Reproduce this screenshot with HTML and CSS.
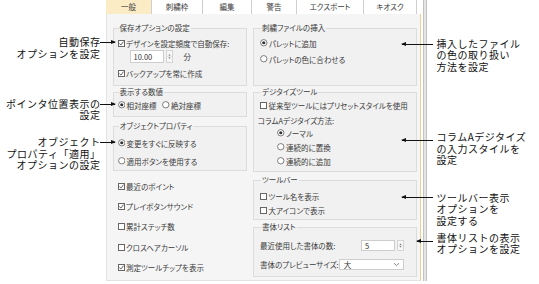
FILE: index.html
```html
<!DOCTYPE html>
<html lang="ja">
<head>
<meta charset="utf-8">
<link rel="stylesheet" href="styles.css">
</head>
<body>
<div class="stage">
  <div class="left-gutter"></div>
  <div class="dialog">
    <div class="tabs">
      <div class="tab active t1">一般</div>
      <div class="tab t2">刺繍枠</div>
      <div class="tab t3">編集</div>
      <div class="tab t4">警告</div>
      <div class="tab t5">エクスポート</div>
      <div class="tab t6">キオスク</div>
    </div>
    <div class="panel">
      <div class="col col-left">
        <fieldset class="group g-save">
          <legend>保存オプションの設定</legend>
          <div class="row h10"><svg class="cb" viewBox="0 0 7 7"><rect x=".5" y=".5" width="6" height="6" fill="#fff" stroke="#666"/><path d="M1.4 3.6 L2.9 5 L5.6 1.6" fill="none" stroke="#333" stroke-width=".8"/></svg>デザインを設定頻度で自動保存:</div>
          <div class="row spin-row">
            <div class="spin-input w34">10.00</div>
            <div class="spinner"><svg viewBox="0 0 7 13"><path d="M2 5 L3.5 3.3 L5 5Z M2 8 L3.5 9.7 L5 8Z" fill="#555"/><line x1="0" y1="6.5" x2="7" y2="6.5" stroke="#d6d6d6" stroke-width=".6"/></svg></div>
            <span class="unit">分</span>
          </div>
          <div class="row h10 mt5"><svg class="cb" viewBox="0 0 7 7"><rect x=".5" y=".5" width="6" height="6" fill="#fff" stroke="#666"/><path d="M1.4 3.6 L2.9 5 L5.6 1.6" fill="none" stroke="#333" stroke-width=".8"/></svg>バックアップを常に作成</div>
        </fieldset>
        <fieldset class="group g-disp">
          <legend>表示する数値</legend>
          <div class="row h10"><svg class="rb" viewBox="0 0 8 8"><circle cx="4" cy="4" r="3.4" fill="#fff" stroke="#555" stroke-width=".8"/><circle cx="4" cy="4" r="1.7" fill="#333"/></svg>相対座標<svg class="rb gap-l" viewBox="0 0 8 8"><circle cx="4" cy="4" r="3.4" fill="#fff" stroke="#555" stroke-width=".8"/></svg>絶対座標</div>
        </fieldset>
        <fieldset class="group g-obj">
          <legend>オブジェクトプロパティ</legend>
          <div class="row h10"><svg class="rb" viewBox="0 0 8 8"><circle cx="4" cy="4" r="3.4" fill="#fff" stroke="#555" stroke-width=".8"/><circle cx="4" cy="4" r="1.7" fill="#333"/></svg>変更をすぐに反映する</div>
          <div class="row h10 mt8"><svg class="rb" viewBox="0 0 8 8"><circle cx="4" cy="4" r="3.4" fill="#fff" stroke="#555" stroke-width=".8"/></svg>適用ボタンを使用する</div>
        </fieldset>
        <div class="loose">
          <div class="row h10"><svg class="cb" viewBox="0 0 7 7"><rect x=".5" y=".5" width="6" height="6" fill="#fff" stroke="#666"/><path d="M1.4 3.6 L2.9 5 L5.6 1.6" fill="none" stroke="#333" stroke-width=".8"/></svg>最近のポイント</div>
          <div class="row h10"><svg class="cb" viewBox="0 0 7 7"><rect x=".5" y=".5" width="6" height="6" fill="#fff" stroke="#666"/><path d="M1.4 3.6 L2.9 5 L5.6 1.6" fill="none" stroke="#333" stroke-width=".8"/></svg>プレイボタンサウンド</div>
          <div class="row h10"><svg class="cb" viewBox="0 0 7 7"><rect x=".5" y=".5" width="6" height="6" fill="#fff" stroke="#666"/></svg>累計ステッチ数</div>
          <div class="row h10"><svg class="cb" viewBox="0 0 7 7"><rect x=".5" y=".5" width="6" height="6" fill="#fff" stroke="#666"/></svg>クロスヘアカーソル</div>
          <div class="row h10"><svg class="cb" viewBox="0 0 7 7"><rect x=".5" y=".5" width="6" height="6" fill="#fff" stroke="#666"/><path d="M1.4 3.6 L2.9 5 L5.6 1.6" fill="none" stroke="#333" stroke-width=".8"/></svg>測定ツールチップを表示</div>
        </div>
      </div>
      <div class="col col-right">
        <fieldset class="group g-ins">
          <legend>刺繍ファイルの挿入</legend>
          <div class="row h10"><svg class="rb" viewBox="0 0 8 8"><circle cx="4" cy="4" r="3.4" fill="#fff" stroke="#555" stroke-width=".8"/><circle cx="4" cy="4" r="1.7" fill="#333"/></svg>パレットに追加</div>
          <div class="row h10 mt6"><svg class="rb" viewBox="0 0 8 8"><circle cx="4" cy="4" r="3.4" fill="#fff" stroke="#555" stroke-width=".8"/></svg>パレットの色に合わせる</div>
        </fieldset>
        <fieldset class="group g-dig">
          <legend>デジタイズツール</legend>
          <div class="row h10"><svg class="cb" viewBox="0 0 7 7"><rect x=".5" y=".5" width="6" height="6" fill="#fff" stroke="#666"/></svg>従来型ツールにはプリセットスタイルを使用</div>
          <div class="row h10 mt5 label-only">コラムAデジタイズ方法:</div>
          <div class="row h10 mt3 indent"><svg class="rb" viewBox="0 0 8 8"><circle cx="4" cy="4" r="3.4" fill="#fff" stroke="#555" stroke-width=".8"/><circle cx="4" cy="4" r="1.7" fill="#333"/></svg>ノーマル</div>
          <div class="row h10 mt4 indent"><svg class="rb" viewBox="0 0 8 8"><circle cx="4" cy="4" r="3.4" fill="#fff" stroke="#555" stroke-width=".8"/></svg>連続的に置換</div>
          <div class="row h10 mt4 indent"><svg class="rb" viewBox="0 0 8 8"><circle cx="4" cy="4" r="3.4" fill="#fff" stroke="#555" stroke-width=".8"/></svg>連続的に追加</div>
        </fieldset>
        <fieldset class="group g-tool">
          <legend>ツールバー</legend>
          <div class="row h10"><svg class="cb" viewBox="0 0 7 7"><rect x=".5" y=".5" width="6" height="6" fill="#fff" stroke="#666"/></svg>ツール名を表示</div>
          <div class="row h10 mt4"><svg class="cb" viewBox="0 0 7 7"><rect x=".5" y=".5" width="6" height="6" fill="#fff" stroke="#666"/></svg>大アイコンで表示</div>
        </fieldset>
        <fieldset class="group g-font">
          <legend>書体リスト</legend>
          <div class="row h11 split">
            <span>最近使用した書体の数:</span>
            <span class="spin-wrap">
              <span class="spin-input w34 small">5</span>
              <span class="spinner small"><svg viewBox="0 0 7 11"><path d="M2 4.3 L3.5 2.8 L5 4.3Z M2 6.7 L3.5 8.2 L5 6.7Z" fill="#555"/><line x1="0" y1="5.5" x2="7" y2="5.5" stroke="#d6d6d6" stroke-width=".6"/></svg></span>
            </span>
          </div>
          <div class="row h11 mt8 split">
            <span>書体のプレビューサイズ:</span>
            <span class="select">大<svg class="chev" viewBox="0 0 7 5"><path d="M1 1.2 L3.5 3.6 L6 1.2" fill="none" stroke="#666" stroke-width=".8"/></svg></span>
          </div>
        </fieldset>
      </div>
    </div>
  </div>
  <div class="frame"></div>

  <div class="callout left c1"><span>自動保存</span><span>オプションを設定</span></div>
  <div class="callout left c2"><span>ポインタ位置表示の</span><span>設定</span></div>
  <div class="callout left c3"><span>オブジェクト</span><span>プロパティ「適用」</span><span>オプションの設定</span></div>

  <div class="callout right r1"><span>挿入したファイル</span><span>の色の取り扱い</span><span>方法を設定</span></div>
  <div class="callout right r2"><span>コラムAデジタイズ</span><span>の入力スタイルを</span><span>設定</span></div>
  <div class="callout right r3"><span>ツールバー表示</span><span>オプションを</span><span>設定する</span></div>
  <div class="callout right r4"><span>書体リストの表示</span><span>オプションを設定</span></div>

  <div class="arrow to-right a1"></div>
  <div class="arrow to-right a2"></div>
  <div class="arrow to-right a3"></div>
  <div class="arrow to-left b1"></div>
  <div class="arrow to-left b2"></div>
  <div class="arrow to-left b3"></div>
  <div class="arrow to-left b4"></div>
</div>
</body>
</html>
```

FILE: styles.css
```css
* { box-sizing: border-box; }
html, body { margin: 0; padding: 0; background: #fff; }
body {
  width: 539px;
  height: 284px;
  overflow: hidden;
  font-family: "Noto Sans CJK JP", "Noto Sans", sans-serif;
}
.stage {
  position: relative;
  width: 539px;
  height: 284px;
  display: flex;
  align-items: flex-start;
}
.left-gutter { width: 106px; flex: none; }

.dialog {
  width: 315px;
  flex: none;
  font-size: 7.5px;
  font-feature-settings: "palt";
  color: #3a3a3a;
}
.tabs {
  height: 14px;
  display: flex;
  background: #fff;
}
.tab {
  height: 14px;
  line-height: 14px;
  text-align: center;
  border-right: 1px solid #cfcfcf;
  color: #3a3a3a;
}
.tab.active { background: #fcecc6; }
.t1 { width: 46px; }
.t2 { width: 51px; }
.t3 { width: 49px; }
.t4 { width: 45px; }
.t5 { width: 67px; }
.t6 { width: 53px; }

.panel {
  height: 267px;
  background: #f5f5f5;
  border-left: 1px solid #e4e4e4;
  border-right: 1px solid #f0cf8c;
  border-bottom: 1px solid #e2e2e2;
  display: flex;
  gap: 6px;
  padding: 9px 3px 0 6px;
}
.col { display: flex; flex-direction: column; }
.col-left { width: 134px; }
.col-right { width: 164px; }

.group {
  margin: 0;
  min-width: 0;
  border: 1px solid #dcdcdc;
  background: #f1f1f1;
}
.group legend {
  padding: 0 1px;
  margin-left: 1px;
  line-height: 10px;
  height: 10px;
  color: #3a3a3a;
}
.col-left .group { padding: 0 3px 0 3.5px; }
.col-right .group { padding: 0 3px 0 6px; }

.g-save { padding-top: 5px !important; padding-bottom: 7px !important; }
.g-disp { margin-top: 1px; padding-top: 3px !important; padding-bottom: 6px !important; }
.g-obj { margin-top: 4px; padding-top: 7px !important; padding-bottom: 4px !important; }
.g-ins { padding-top: 5px !important; padding-bottom: 21px !important; }
.g-dig { margin-top: 1px; padding-top: 3px !important; padding-bottom: 5px !important; }
.g-tool { margin-top: 3px; padding-top: 6px !important; padding-bottom: 4px !important; }
.g-font { margin-top: 2px; padding-top: 8px !important; padding-bottom: 6px !important; padding-right: 12px !important; }

.row {
  display: flex;
  align-items: center;
  white-space: nowrap;
}
.h10 { height: 10px; }
.h11 { height: 11px; }
.mt3 { margin-top: 3px; }
.mt4 { margin-top: 4px; }
.mt5 { margin-top: 5px; }
.mt6 { margin-top: 6px; }
.mt8 { margin-top: 8px; }

.cb { width: 7px; height: 7px; flex: none; margin-right: 1.5px; }
.rb { width: 7.5px; height: 7.5px; flex: none; margin-right: 1.5px; }
.gap-l { margin-left: 5.5px; }
.label-only { margin-left: -2px; }
.indent { padding-left: 17px; }

.spin-row {
  height: 13px;
  margin-top: 2px;
  padding-left: 12px;
}
.spin-input {
  height: 13px;
  background: #fff;
  border: 1px solid #cdcdcd;
  display: flex;
  align-items: center;
  padding-left: 3px;
  color: #333;
}
.w34 { width: 34px; }
.spinner {
  width: 7px;
  height: 13px;
  margin-left: 2px;
  background: #f7f7f7;
  border: 1px solid #d4d4d4;
  display: flex;
}
.spinner svg { width: 100%; height: 100%; display: block; }
.spin-input.small { height: 11px; }
.spinner.small { height: 11px; }
.unit { margin-left: 11px; }

.split { justify-content: space-between; }
.spin-wrap { display: flex; align-items: center; }
.select {
  width: 72px;
  height: 11px;
  background: #fff;
  border: 1px solid #cdcdcd;
  display: flex;
  align-items: center;
  justify-content: space-between;
  padding: 0 3px 0 4px;
  color: #333;
}
.chev { width: 7px; height: 5px; }

.loose {
  display: flex;
  flex-direction: column;
  gap: 10.4px;
  margin-top: 10px;
  padding-left: 4.5px;
}

.frame {
  width: 4px;
  height: 281px;
  margin-left: 2px;
  flex: none;
  background: #e4e4e4;
  border-left: 1px solid #c2c2c2;
  border-right: 1px solid #c2c2c2;
}

.callout {
  position: absolute;
  display: flex;
  flex-direction: column;
  font-size: 10px;
  letter-spacing: 0.5px;
  color: #111;
  white-space: nowrap;
}
.callout span {
  display: block;
  height: 11.6px;
  line-height: 11.6px;
}
.callout.left { right: 438.5px; align-items: flex-end; }
.callout.right { left: 436.5px; align-items: flex-start; }
.c1 { top: 36px; }
.c2 { top: 97.5px; }
.c3 { top: 136px; }
.r1 { top: 37.5px; }
.r2 { top: 131px; }
.r3 { top: 191.5px; }
.r4 { top: 231.5px; }

.arrow {
  position: absolute;
  height: 1px;
  background: #111;
}
.arrow::after {
  content: "";
  position: absolute;
  top: -2px;
  border-top: 2.5px solid transparent;
  border-bottom: 2.5px solid transparent;
}
.arrow.to-right::after { right: -1px; border-left: 5px solid #111; }
.arrow.to-left::after { left: -1px; border-right: 5px solid #111; }
.a1 { left: 100px; width: 15px; top: 42px; }
.a2 { left: 100px; width: 15px; top: 104px; }
.a3 { left: 100px; width: 15px; top: 142px; }
.b1 { left: 402px; width: 31px; top: 44px; }
.b2 { left: 402px; width: 31px; top: 140px; }
.b3 { left: 402px; width: 31px; top: 197px; }
.b4 { left: 417px; width: 16px; top: 241px; }
```
